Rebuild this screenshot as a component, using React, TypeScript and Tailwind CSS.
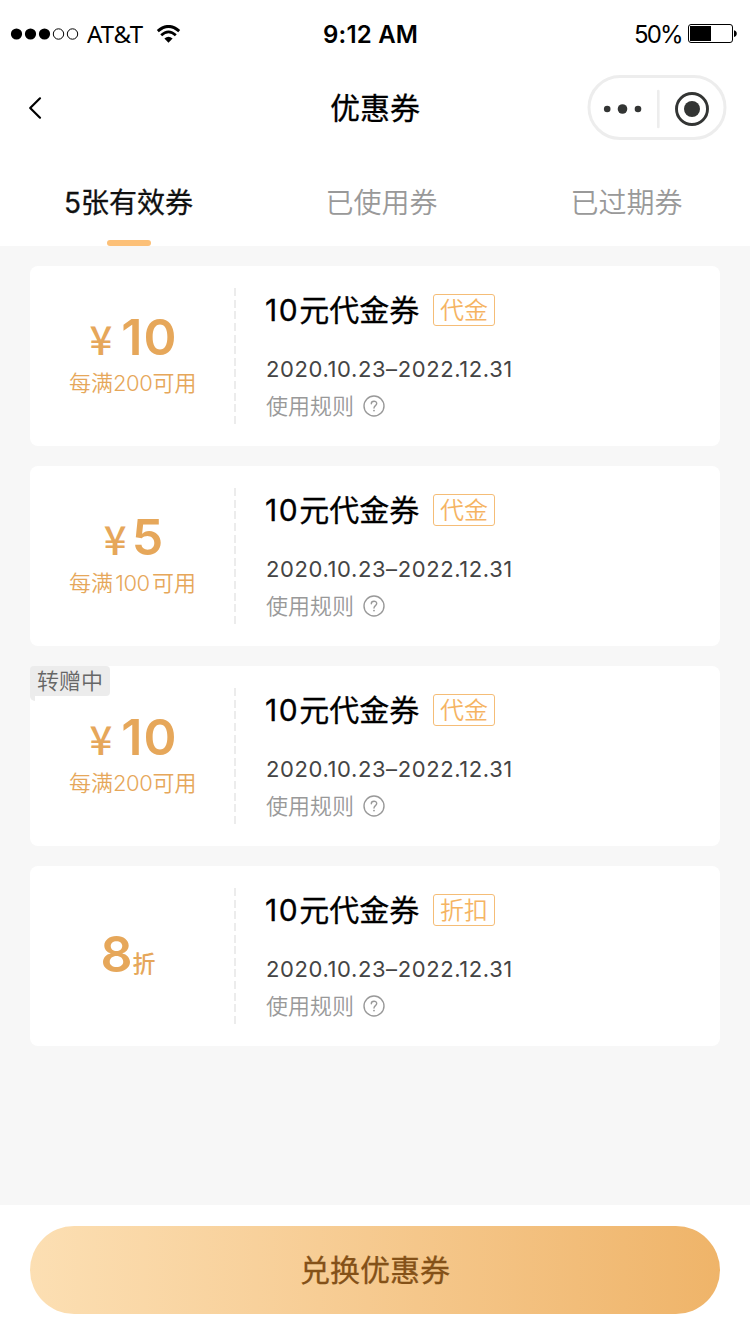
import React from "react";

type Coupon = {
  amount: string;
  kind: "cash" | "discount";
  condition?: string;
  tag: string;
  gifting?: boolean;
};

const coupons: Coupon[] = [
  { amount: "10", kind: "cash", condition: "200", tag: "代金" },
  { amount: "5", kind: "cash", condition: "100", tag: "代金" },
  { amount: "10", kind: "cash", condition: "200", tag: "代金", gifting: true },
  { amount: "8", kind: "discount", tag: "折扣" },
];

function StatusBar() {
  return (
    <div className="flex h-[68px] items-center text-black">
      <svg className="ml-[10px] block" width="70" height="14" viewBox="0 0 70 14">
        <circle cx="6.5" cy="7" r="5.6" />
        <circle cx="20.5" cy="7" r="5.6" />
        <circle cx="34.5" cy="7" r="5.6" />
        <circle cx="48.5" cy="7" r="5.2" fill="none" stroke="#000" />
        <circle cx="62.5" cy="7" r="5.2" fill="none" stroke="#000" />
      </svg>
      <span className="ml-[7px] w-[69px] font-['Noto_Sans'] text-[24px] leading-[34px]">AT&amp;T</span>
      <svg className="block" width="25" height="19" viewBox="0 0 25 19" fill="none" stroke="#000">
        <path d="M1.8 6.2Q12.5-3.4 23.2 6.2" strokeWidth="2.9" />
        <path d="M5.2 10.2Q12.5 3.4 19.8 10.2" strokeWidth="2.7" />
        <path d="M8.4 13.6Q12.5 10.1 16.6 13.6L12.5 17.8Z" fill="#000" stroke="none" />
      </svg>
      <span className="ml-[142px] w-[311px] pt-[2px] text-[24px] font-semibold leading-[34px] tracking-[0.2px]">9:12 AM</span>
      <span className="w-[54px] pt-[2px] text-[24px] leading-[34px] tracking-[-1.9px]">50%</span>
      <svg className="block" width="50" height="20" viewBox="0 0 50 20">
        <rect x="0.5" y="0.5" width="44" height="18" rx="2.5" fill="none" stroke="#000" />
        <rect x="2" y="2" width="21" height="15" />
        <path d="M46 6.2c3.7 1 3.7 5.8 0 6.8z" />
      </svg>
    </div>
  );
}

function NavBar() {
  return (
    <div className="grid h-[80px] grid-cols-[1fr_auto_1fr] items-center">
      <svg className="ml-7 block" width="14" height="24" viewBox="0 0 14 24" fill="none" stroke="#000" strokeWidth="2.2" strokeLinecap="round" strokeLinejoin="round">
        <path d="M12 2.3 2.2 12 12 21.7" />
      </svg>
      <h1 className="text-[30px] font-normal leading-[44px] text-black [-webkit-text-stroke:0.3px]">优惠券</h1>
      <svg className="mb-[2px] mr-[23px] block justify-self-end" width="140" height="66" viewBox="0 0 140 66">
        <rect x="2" y="2.5" width="136" height="62" rx="31" fill="none" stroke="#ededed" strokeWidth="3" />
        <path d="M71.3 17v36" stroke="#ededed" strokeWidth="2.6" strokeLinecap="round" />
        <circle cx="20.2" cy="35" r="3.3" fill="#333534" />
        <circle cx="35.5" cy="35" r="4.8" fill="#333534" />
        <circle cx="51" cy="35" r="3.3" fill="#333534" />
        <circle cx="105" cy="35" r="15.5" fill="none" stroke="#333534" strokeWidth="2.9" />
        <circle cx="105" cy="35" r="8" fill="#333534" />
      </svg>
    </div>
  );
}

function Tabs() {
  return (
    <div className="flex h-[98px] text-[28px] font-[350] leading-[40px] text-[#999999]">
      <div className="flex w-[257px] flex-col items-center justify-between pt-[35px]">
        <span className="font-normal text-[#111111] [-webkit-text-stroke:0.3px]">5张有效券</span>
        <span className="h-[6px] w-[44px] rounded-full bg-[#fcc078]" />
      </div>
      <div className="flex w-[249px] justify-center pt-[35px]">已使用券</div>
      <div className="flex w-[241px] justify-center pt-[35px]">已过期券</div>
    </div>
  );
}

function HelpIcon() {
  return (
    <svg className="ml-[8px] block" width="24" height="24" viewBox="0 0 24 24" fill="none" stroke="#999" strokeWidth="1.4">
      <circle cx="12" cy="12" r="10" />
      <path d="M9.3 9.8C9.3 6.4 14.7 6.4 14.7 9.6C14.7 11.7 12 11.6 12 14" strokeLinecap="round" />
      <circle cx="12" cy="16.6" r="0.9" fill="#999" stroke="none" />
    </svg>
  );
}

function CashAmount({ amount }: { amount: string }) {
  const wide = amount.length > 1;
  return (
    <div className={wide ? "mt-[40px] flex h-[62px] items-baseline gap-[9px] pl-[3px]" : "mt-[40px] flex h-[62px] items-baseline gap-[5px] pl-[4px]"}>
      <span className="font-['Noto_Sans_CJK_SC'] text-[40px] font-medium leading-[62px]">¥</span>
      <span className="text-[50px] font-semibold leading-[62px] tracking-[1px]">{amount}</span>
    </div>
  );
}

function CouponCard({ coupon }: { coupon: Coupon }) {
  return (
    <article className="relative flex h-[180px] rounded-lg bg-white">
      {coupon.gifting && (
        <div className="absolute left-0 top-0">
          <div className="h-[30px] w-[80px] rounded-t-sm rounded-br-sm bg-[#ececec] pl-[7px] text-[22px] font-[350] leading-[30px] text-[#666666]">转赠中</div>
          <div className="h-[5px] w-[5px] rounded-bl-full bg-[#ececec]" />
        </div>
      )}
      <div className="flex w-[204px] flex-col items-center text-[#e6a75a]">
        {coupon.kind === "cash" ? (
          <>
            <CashAmount amount={coupon.amount} />
            <div className="flex w-[128px] justify-between whitespace-nowrap pl-px text-[22px] font-[350] leading-[30px]">
              <span className="shrink-0">每满</span>
              <span className="tracking-[-0.4px]">{coupon.condition}</span>
              <span className="shrink-0">可用</span>
            </div>
          </>
        ) : (
          <div className="mr-[8px] mt-[57px] flex h-[62px] items-baseline font-semibold">
            <span className="text-[50px] leading-[62px]">{coupon.amount}</span>
            <span className="text-[23px] font-medium">折</span>
          </div>
        )}
      </div>
      <div className="mt-[22px] h-[136px] w-[2px] bg-[repeating-linear-gradient(to_bottom,#ececec_0_8px,transparent_8px_11.63px)]" />
      <div className="ml-[29px] flex flex-col">
        <div className="mt-[24px] flex h-[40px] items-center">
          <h2 className="w-[168px] whitespace-nowrap text-[30px] font-normal leading-[40px] text-black [-webkit-text-stroke:0.3px]">
            <span className="tracking-[1.6px]">10</span>元代金券
          </h2>
          <span className="flex h-8 w-[62px] items-center justify-center rounded-[3px] border border-[#f5bd77] pt-[2px] text-[24px] font-[350] leading-[28px] text-[#f5b463]">{coupon.tag}</span>
        </div>
        <div className="mt-[24px] h-[30px] pl-px text-[22px] font-normal leading-[30px] tracking-[0.6px] text-[#444444]">2020.10.23–2022.12.31</div>
        <div className="mt-[7px] flex h-[30px] items-center pl-px text-[22px] font-[350] leading-[30px] text-[#999999]">
          使用规则
          <HelpIcon />
        </div>
      </div>
    </article>
  );
}

export default function App() {
  return (
    <main className="flex h-[1334px] w-[750px] flex-col overflow-hidden bg-[#f7f7f7] font-['Inter','Noto_Sans_CJK_SC',sans-serif]">
      <header className="h-[246px] bg-white">
        <StatusBar />
        <NavBar />
        <Tabs />
      </header>
      <section className="flex flex-1 flex-col gap-5 px-[30px] pt-5">
        {coupons.map((coupon, index) => (
          <CouponCard key={index} coupon={coupon} />
        ))}
      </section>
      <footer className="h-[129px] bg-white px-[30px] pt-[21px]">
        <button className="h-[88px] w-full rounded-full bg-linear-to-r from-[#fcdfb3] to-[#efb469] text-[30px] font-normal text-[#845118] [-webkit-text-stroke:0.3px]">兑换优惠券</button>
      </footer>
    </main>
  );
}
